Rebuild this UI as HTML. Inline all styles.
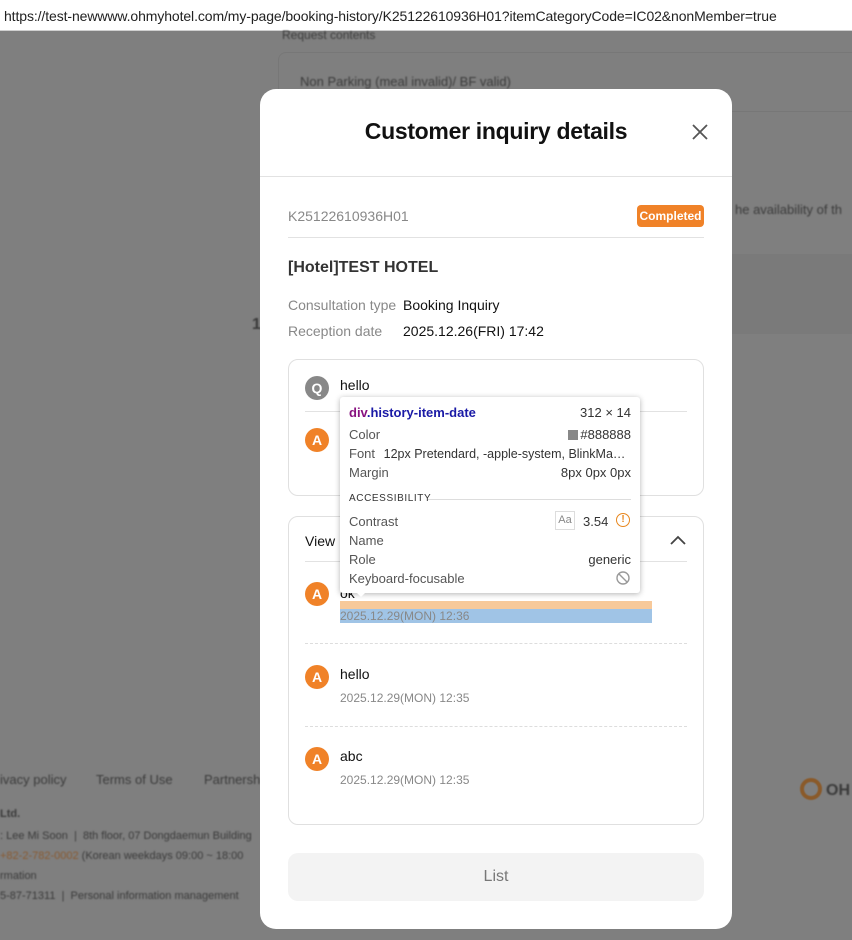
<!DOCTYPE html>
<html><head><meta charset="utf-8"><style>
*{box-sizing:border-box;margin:0;padding:0}
body{width:852px;height:940px;overflow:hidden;background:#7f7f7f;font-family:"Liberation Sans",sans-serif;position:relative}
.a{position:absolute}
.bar{left:0;top:0;width:852px;height:31px;background:#fff;border-bottom:1px solid #d0d0d0;font-size:14px;color:#222;padding:8px 0 0 4px;white-space:nowrap;letter-spacing:-0.1px}
.bg{color:#3a3a3a;font-size:13px;filter:blur(0.8px)}
.modal{left:260px;top:89px;width:472px;height:840px;background:#fff;border-radius:16px}
.t{font-size:14px;color:#111}
.g{color:#888}
.av{width:24px;height:24px;border-radius:50%;color:#fff;font-weight:bold;font-size:14px;text-align:center;line-height:24px}
.o{background:#f08228}
.box{border:1px solid #e0e0e0;border-radius:10px}
.tip{background:#fff;border-radius:3px;box-shadow:0 1px 6px rgba(0,0,0,.3);font-size:13px;color:#555}
.tip div{position:absolute}
</style></head><body>
<div class="a bar">https://test-newwww.ohmyhotel.com/my-page/booking-history/K25122610936H01?itemCategoryCode=IC02&amp;nonMember=true</div>
<div class="a bg" style="left:282px;top:28px;font-size:12px">Request contents</div>
<div class="a" style="left:278px;top:52px;width:600px;height:60px;border:1px solid #777;border-radius:8px"></div>
<div class="a bg" style="left:300px;top:74px">Non Parking (meal invalid)/ BF valid)</div>
<div class="a bg" style="left:735px;top:202px">he availability of th</div>
<div class="a" style="left:732px;top:254px;width:120px;height:80px;background:#7a7a7a"></div>
<div class="a bg" style="left:252px;top:316px;font-size:16px;font-weight:bold">1</div>
<div class="a bg" style="left:0;top:772px">ivacy policy</div>
<div class="a bg" style="left:96px;top:772px">Terms of Use</div>
<div class="a bg" style="left:204px;top:772px">Partnersh</div>
<div class="a bg" style="left:0;top:808px;font-size:11px;font-weight:bold">Ltd.</div>
<div class="a bg" style="left:0;top:830px;font-size:11px">: Lee Mi Soon &nbsp;|&nbsp; 8th floor, 07 Dongdaemun Building</div>
<div class="a bg" style="left:0;top:850px;font-size:11px"><span style="color:#8a5a30">+82-2-782-0002</span> (Korean weekdays 09:00 ~ 18:00</div>
<div class="a bg" style="left:0;top:870px;font-size:11px">rmation</div>
<div class="a bg" style="left:0;top:890px;font-size:11px">5-87-71311 &nbsp;|&nbsp; Personal information management</div>
<div class="a" style="left:800px;top:778px;width:22px;height:22px;border:4px solid #8a5a2a;border-radius:50%;filter:blur(0.6px)"></div>
<div class="a bg" style="left:826px;top:782px;font-size:16px;font-weight:bold">OH</div>

<div class="a modal"></div>
<div class="a" style="left:260px;top:118px;width:472px;text-align:center;font-size:23px;font-weight:bold;color:#111;letter-spacing:-0.3px">Customer inquiry details</div>
<svg class="a" style="left:690px;top:122px" width="20" height="20" viewBox="0 0 20 20"><path d="M3 3L17 17M17 3L3 17" stroke="#555" stroke-width="1.8"/></svg>
<div class="a" style="left:260px;top:176px;width:472px;height:1px;background:#e2e2e2"></div>
<div class="a g" style="left:288px;top:208px;font-size:14px">K25122610936H01</div>
<div class="a" style="left:637px;top:205px;width:67px;height:22px;background:#f08228;border-radius:4px;color:#fff;font-size:12px;font-weight:bold;text-align:center;line-height:22px">Completed</div>
<div class="a" style="left:288px;top:237px;width:416px;height:1px;background:#e2e2e2"></div>
<div class="a" style="left:288px;top:259px;font-size:16px;font-weight:bold;color:#333">[Hotel]TEST HOTEL</div>
<div class="a g" style="left:288px;top:297px;font-size:14px">Consultation type</div>
<div class="a t" style="left:403px;top:297px">Booking Inquiry</div>
<div class="a g" style="left:288px;top:323px;font-size:14px">Reception date</div>
<div class="a t" style="left:403px;top:323px">2025.12.26(FRI) 17:42</div>

<div class="a box" style="left:288px;top:359px;width:416px;height:137px"></div>
<div class="a av" style="left:305px;top:376px;background:#888">Q</div>
<div class="a t" style="left:340px;top:377px">hello</div>
<div class="a" style="left:305px;top:411px;width:382px;height:1px;background:#e2e2e2"></div>
<div class="a av o" style="left:305px;top:428px">A</div>

<div class="a box" style="left:288px;top:516px;width:416px;height:309px"></div>
<div class="a t" style="left:305px;top:533px">View R</div>
<svg class="a" style="left:669px;top:533px" width="18" height="14" viewBox="0 0 18 14"><path d="M2 11L9 4L16 11" stroke="#444" stroke-width="1.8" fill="none"/></svg>
<div class="a" style="left:305px;top:561px;width:382px;height:1px;background:#e2e2e2"></div>
<div class="a av o" style="left:305px;top:582px">A</div>
<div class="a t" style="left:340px;top:585px">ok</div>
<div class="a" style="left:340px;top:601px;width:312px;height:8px;background:#f7c99a"></div>
<div class="a" style="left:340px;top:609px;width:312px;height:14px;background:#a0c4e6"></div>
<div class="a g" style="left:340px;top:609px;font-size:12px">2025.12.29(MON) 12:36</div>
<div class="a" style="left:305px;top:643px;width:382px;border-top:1px dashed #ddd"></div>
<div class="a av o" style="left:305px;top:665px">A</div>
<div class="a t" style="left:340px;top:666px">hello</div>
<div class="a g" style="left:340px;top:691px;font-size:12px">2025.12.29(MON) 12:35</div>
<div class="a" style="left:305px;top:726px;width:382px;border-top:1px dashed #ddd"></div>
<div class="a av o" style="left:305px;top:747px">A</div>
<div class="a t" style="left:340px;top:748px">abc</div>
<div class="a g" style="left:340px;top:773px;font-size:12px">2025.12.29(MON) 12:35</div>

<div class="a" style="left:288px;top:853px;width:416px;height:48px;background:#f3f3f3;border-radius:10px;text-align:center;line-height:48px;color:#777;font-size:16px">List</div>

<div class="a tip" style="left:340px;top:397px;width:300px;height:196px">
<div style="left:9px;top:8px;font-weight:bold;color:#222;font-size:13px"><span style="color:#881280">div</span><span style="color:#1a1aa6">.history-item-date</span></div>
<div style="right:9px;top:8px;color:#333">312 × 14</div>
<div style="left:9px;top:30px">Color</div>
<div style="right:9px;top:30px;color:#333"><span style="display:inline-block;width:10px;height:10px;background:#888;vertical-align:-1px;margin-right:2px"></span>#888888</div>
<div style="left:9px;top:49px;white-space:nowrap">Font <span style="color:#333;margin-left:5px;font-size:12.5px">12px Pretendard, -apple-system, BlinkMa…</span></div>
<div style="left:9px;top:68px">Margin</div>
<div style="right:9px;top:68px;color:#333">8px 0px 0px</div>
<div style="left:9px;top:96px;font-size:10px;letter-spacing:.6px;color:#333">ACCESSIBILITY</div>
<div style="left:88px;top:102px;width:203px;height:1px;background:#ddd"></div>
<div style="left:9px;top:117px">Contrast</div>
<div style="left:215px;top:114px;width:20px;height:19px;border:1px solid #ddd;font-size:11px;text-align:center;line-height:17px;color:#888">Aa</div>
<div style="left:243px;top:117px;color:#333">3.54</div>
<div style="left:276px;top:116px;width:14px;height:14px;border:1.5px solid #e8871e;border-radius:50%;color:#e8871e;font-size:10px;font-weight:bold;text-align:center;line-height:11px">!</div>
<div style="left:9px;top:136px">Name</div>
<div style="left:9px;top:155px">Role</div>
<div style="right:9px;top:155px;color:#333">generic</div>
<div style="left:9px;top:174px">Keyboard-focusable</div>
<svg style="position:absolute;left:276px;top:174px" width="14" height="14" viewBox="0 0 14 14"><circle cx="7" cy="7" r="6" stroke="#999" stroke-width="1.4" fill="none"/><path d="M3 3L11 11" stroke="#999" stroke-width="1.4"/></svg>
</div>
<div class="a" style="left:353px;top:589px;width:0;height:0;border-left:8px solid transparent;border-right:8px solid transparent;border-top:8px solid #fff"></div>
</body></html>
